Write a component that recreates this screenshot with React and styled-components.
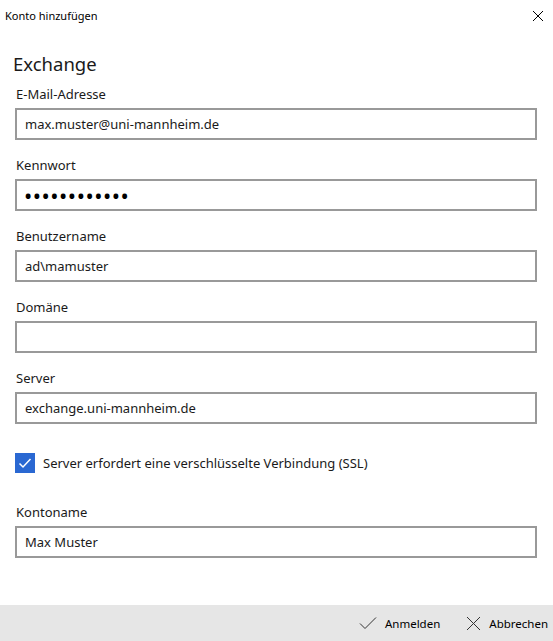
import React, { useState } from 'react'
import styled, { createGlobalStyle } from 'styled-components'

const GlobalStyle = createGlobalStyle`
    html, body {
        margin: 0;
        padding: 0;
        background: #fff;
    }
    body {
        font-family: "Noto Sans", "Open Sans", sans-serif;
        color: #1a1a1a;
    }
`

const fields = [
    { label: 'E-Mail-Adresse', value: 'max.muster@uni-mannheim.de' },
    { label: 'Kennwort', value: '••••••••••••', secret: true },
    { label: 'Benutzername', value: 'ad\\mamuster' },
    { label: 'Domäne', value: '' },
    { label: 'Server', value: 'exchange.uni-mannheim.de' },
]

function App() {
    const [ssl, setSsl] = useState(true)
    return (
        <>
            <GlobalStyle />
            <Window>
                <TitleBar>
                    <span>Konto hinzufügen</span>
                    <CloseButton aria-label="Schließen">
                        <svg width="12" height="12" viewBox="0 0 12 12">
                            <path d="M1 1 L11 11 M11 1 L1 11" stroke="#000" strokeWidth="1" fill="none" />
                        </svg>
                    </CloseButton>
                </TitleBar>
                <Body>
                    <Heading>Exchange</Heading>
                    {fields.map((f) => (
                        <Field key={f.label}>
                            <Label>{f.label}</Label>
                            <Input $secret={f.secret}>{f.value}</Input>
                        </Field>
                    ))}
                    <CheckRow onClick={() => setSsl(!ssl)}>
                        <CheckBox $on={ssl}>
                            {ssl && (
                                <svg width="14" height="12" viewBox="0 0 14 12">
                                    <path d="M1.5 6.5 L5 10 L12.5 2" stroke="#fff" strokeWidth="1.5" fill="none" />
                                </svg>
                            )}
                        </CheckBox>
                        <span>Server erfordert eine verschlüsselte Verbindung (SSL)</span>
                    </CheckRow>
                    <Field>
                        <Label>Kontoname</Label>
                        <Input>Max Muster</Input>
                    </Field>
                </Body>
                <Footer>
                    <FooterButton>
                        <svg width="18" height="14" viewBox="0 0 18 14">
                            <path d="M1 7.5 L6 12.5 L17 1.5" stroke="#333" strokeWidth="1" fill="none" />
                        </svg>
                        Anmelden
                    </FooterButton>
                    <FooterButton>
                        <svg width="15" height="15" viewBox="0 0 15 15">
                            <path d="M1 1 L14 14 M14 1 L1 14" stroke="#333" strokeWidth="1" fill="none" />
                        </svg>
                        Abbrechen
                    </FooterButton>
                </Footer>
            </Window>
        </>
    )
}

export default App

const Window = styled.div`
    width: 553px;
    height: 641px;
    display: flex;
    flex-direction: column;
    background: #fff;
    overflow: hidden;
`

const TitleBar = styled.div`
    height: 31px;
    display: flex;
    align-items: center;
    justify-content: space-between;
    padding: 0 9px 0 5px;
    font-size: 11px;
    color: #000;
`

const CloseButton = styled.div`
    display: flex;
    align-items: center;
    width: 12px;
    height: 12px;
`

const Body = styled.div`
    flex: 1;
    padding: 19px 16px 0 15px;
`

const Heading = styled.h1`
    margin: 0 0 7px -2px;
    font-size: 18.5px;
    font-weight: 400;
    line-height: 28px;
`

const Field = styled.div`
    display: flex;
    flex-direction: column;
    margin-bottom: 16px;
`

const Label = styled.div`
    font-size: 13px;
    line-height: 18px;
    margin: 0 0 5px 1px;
`

const Input = styled.div`
    box-sizing: border-box;
    height: 32px;
    border: 2px solid #999;
    padding: 0 ${(p) => (p.$secret ? '7px' : '8px')};
    display: flex;
    align-items: center;
    font-size: ${(p) => (p.$secret ? '22px' : '13px')};
    letter-spacing: ${(p) => (p.$secret ? '0.5px' : '0')};
    color: ${(p) => (p.$secret ? '#000' : 'inherit')};
`

const CheckRow = styled.div`
    display: flex;
    align-items: center;
    gap: 8px;
    margin: 29px 0 30px;
    font-size: 13px;
    cursor: pointer;
`

const CheckBox = styled.div`
    box-sizing: border-box;
    width: 20px;
    height: 20px;
    background: ${(p) => (p.$on ? '#2a68d2' : '#fff')};
    border: ${(p) => (p.$on ? 'none' : '2px solid #333')};
    display: flex;
    align-items: center;
    justify-content: center;
`

const Footer = styled.div`
    height: 36px;
    background: #e6e6e6;
    display: flex;
    justify-content: flex-end;
    align-items: center;
    gap: 26px;
    padding-right: 5px;
`

const FooterButton = styled.div`
    display: flex;
    align-items: center;
    gap: 8px;
    font-size: 11.5px;
    color: #000;
`
